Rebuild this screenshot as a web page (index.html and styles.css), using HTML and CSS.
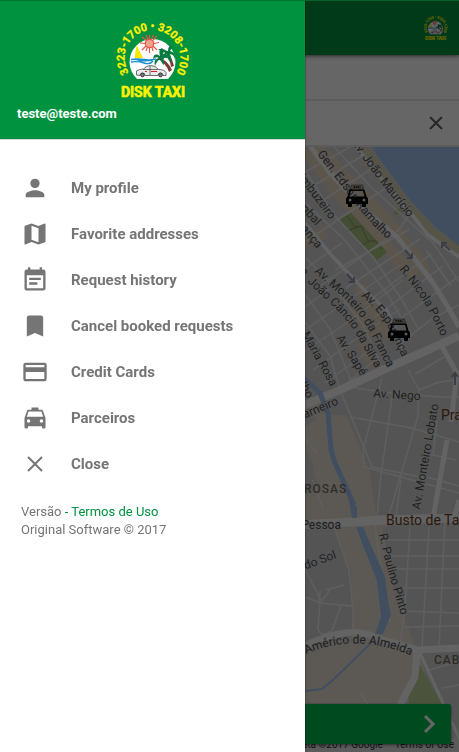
FILE: index.html
```html
<!DOCTYPE html>
<html lang="en">
<head>
<meta charset="utf-8">
<meta name="viewport" content="width=device-width, initial-scale=1">
<title>Disk Taxi</title>
<link rel="stylesheet" href="styles.css">
</head>
<body>
<svg class="defs" aria-hidden="true">
  <symbol id="logo" viewBox="113 21 77 78">
    <path id="ring" d="M151.500 86A28 28 0 1 1 151.600 86" fill="none"/>
    <path d="M136 79A23 23 0 1 1 167 79Z" fill="#fff"/>
    <g stroke="#e4574a" stroke-width="1.200">
      <path d="M148.500 35v4M148.500 48v5M139 43l5 .5M153 43.500l5-1M141 37l4 3M152 46l4 4M156 36l-4 4M145 46l-4 4M145 35l1.500 4M152.500 35l-2 4M152 51l-1-4M145 51l1.500-4" fill="none"/>
      <circle cx="148.500" cy="43.500" r="4.200" fill="#f4a08f"/>
    </g>
    <path d="M135.500 45L142 58H133.500Z" fill="#f7e600"/>
    <path d="M130 59.500q7-1 13 0t12-.5M130 62q7-1 13 1t9-2M134 59q8 3 18 1" fill="none" stroke="#1b8fd0" stroke-width="1.400"/>
    <path d="M158 57q9 4 13 13l-3 2q-3-9-11-13zM167 52q4 6 6 14l-3 1q-1-8-5-14z" fill="#7c3830"/>
    <path d="M159 56q-6-4-7 3q3-3 6-1q-6 1-4 8q2-6 6-7q0 4 3 6q0-5-1-7q5-1 7 2q0-6-7-6q2-4-1-6q-4 2-2 8zM166 51q-6-4-9-1q5 0 7 3q-4 3-2 7q2-4 4-6q0 5 4 9q1-5-1-9q4 0 5 6q1-8-5-9q2-3 3-5q-5-1-5 5z" fill="#087a40"/>
    <path d="M135.500 75v-4q3-2 7-2q3-3.500 7-3.500q5 0 8 4q6 0 7.500 3v3h-3a2.500 2.500 0 0 0-5 0h-13a2.500 2.500 0 0 0-5 0zM142 69.500h15M149 66v9" fill="#e9e9e9" stroke="#333" stroke-width=".7"/>
    <circle cx="141.500" cy="75" r="1.900" fill="#777" stroke="#222" stroke-width=".7"/>
    <circle cx="159.500" cy="75" r="1.900" fill="#777" stroke="#222" stroke-width=".7"/>
    <path d="M144 71.500h2M150 71.500h6" stroke="#c22" stroke-width="1"/>
    <text class="logo-ring" text-anchor="middle"><textPath href="#ring" startOffset="50%">3223-1700 • 3208-1700</textPath></text>
    <text class="logo-name" x="152" y="97" text-anchor="middle">DISK TAXI</text>
  </symbol>
  <symbol id="cab" viewBox="0 0 22 24">
    <path d="M5.500 1h11l1 4h-13z" fill="#b9a998" stroke="#222" stroke-width=".5"/>
    <path d="M7.500 3h7" stroke="#111" stroke-width="1.500" stroke-dasharray="1.500 .5"/>
    <path fill-rule="evenodd" d="M3.500 5.500h15L20.500 12.500 22 14.500V20H20v2.500q-2 1-4 0V20H6v2.500q-2 1-4 0V20H0v-5.500l1.500-2zM5 7L3.500 12.500h15L17 7z" fill="#050505"/>
    <circle cx="4" cy="16" r="1.500" fill="#ddd"/><circle cx="18" cy="16" r="1.500" fill="#ddd"/>
  </symbol>
</svg>

<div class="app">
  <header class="toolbar"><svg class="toolbar-logo" role="img" aria-label="Disk Taxi"><use href="#logo"/></svg></header>
  <div class="address-row"></div>
  <div class="address-row destination">
    <button class="clear" type="button" aria-label="Clear"><svg viewBox="0 0 16 16"><path d="M2 2l12 12M14 2L2 14"/></svg></button>
  </div>
  <main class="map">
    <svg class="map-canvas" viewBox="0 147 459 605" preserveAspectRatio="xMaxYMin slice">
      <defs>
        <path id="r-ramalho" d="M317 154Q340 184 356 205T392 243"/>
        <path id="r-mauricio" d="M351 142Q370 169 384 187T418 230"/>
        <path id="r-monteiro" d="M314 272L345 299Q363 317 372 336T390 372"/>
        <path id="r-cancio" d="M297 273L330 303Q350 322 359 339T379 374"/>
        <path id="r-esperanca" d="M361 296Q382 314 389 329T404 362"/>
        <path id="r-nicola" d="M399 269Q422 297 429 311T442 338"/>
        <path id="r-paulino" d="M379 534Q385 562 391 582T404 625"/>
        <path id="r-americo" d="M306 654Q356 632 412 656"/>
      </defs>
      <rect y="147" width="459" height="605" fill="#d3d3d3"/>
      <g fill="#e5dfd2">
        <path d="M300 400h18l8 15 20 0 25 60 18 55 12 80 30 35h28l-52 58H300V500l18-13-18-60z"/>
      </g>
      <g fill="#d3d3d3">
        <path d="M305 402l12 17-12 8zM305 450l10 18-10 6zM305 527h28l18 43 2 40-2 33-24-6-22 8z"/>
        <path d="M365 440l20-35 5 110h-14zM382 527h77v120l-42 3-20-50zM419 652h40v100l-30-65z"/>
      </g>
      <path d="M368 140L380 160 410 200 433 225 459 246V140z" fill="#a0c4f0"/>
      <path d="M362 147L376 162 406 203 431 229 459 251" fill="none" stroke="#d8d2ae" stroke-width="7"/>
      <g fill="none" stroke="#e4d4bd" stroke-width="12">
        <path d="M318 147L350 184 382 215 409 247 426 273M306 150L337 192 372 229 397 258 416 276M358 286L375 312 385 333 368 330 354 307M362 340l13 28M302 244l23-12"/>
      </g>
      <path d="M339 219l12-6 36 39-10 8z" fill="#a9c27e"/>
      <path d="M393 213l8-6 2 4-7 5z" fill="#b9ce91"/>
      <path d="M347 216l8 11 6-1 7 15 8 0 5 8M347 231l14-5M361 246l9-5" fill="none" stroke="#94916b"/>
      <path d="M420 665l-12 31 1 8h33z" fill="#bdcf9a"/>
      <g fill="none" stroke="#ececec" stroke-width="1.500">
        <path d="M305 172L350 147M315 185L365 154M325 199L373 168M334 222L386 188M305 242L344 216M305 269L342 243M319 287L399 230 410 213M335 270L410 229M346 288L420 239M365 304L431 254M375 317L443 266M389 327L459 276M401 343L433 318 459 305"/>
        <path d="M305 307L329 289M305 330L343 304 400 265M305 351L354 318 403 280M313 370L363 334 400 309M325 383L369 351M342 387L375 360"/>
        <path d="M334 147L372 188 434 244 459 282M305 171L335 216 373 257 402 300 419 330M305 203L345 240 388 295 412 336M305 257L333 286 363 325 383 369M305 294L330 329 352 383M305 322L330 356 340 390 372 467 425 478M426 250L451 286"/>
        <path d="M305 437l12 17M313 480l10 30M382 378L363 450 364 467 459 493M408 370l11 20-1 26-19 65-10 34M415 374l29-17M419 390l17-7 23-4M355 388l28 4 57 5h19M350 417l62 11 47 14M393 391l-12 84-4 43M437 421l-4 33M401 480l-5 35M424 453l32 7M427 477l32 9"/>
        <path d="M375 525l10 70 5 27M410 527l-5 80-5 40M429 527l-7 120M445 520l-6 127M380 540h79M385 556h74M391 569h68M397 588h62M401 611l58 2M404 627l55-1M334 527l15 43 4 40 0 25M305 570l16 30M326 590l18-5M320 590l-1 13 33 3M320 604l-2 25q4 10 14 1l9-24M330 590l-10 13-15-6M361 694l7 11M430 670l29-9M442 688l17-3"/>
      </g>
      <g fill="none" stroke="#f7f7f7" stroke-linejoin="round">
        <path d="M308 143L330 173 367 212 397 237 417 262 433 283 448 307 459 327" stroke-width="5"/>
        <path d="M353 143L380 177 410 212 428 235 459 257" stroke-width="3.500"/>
        <path d="M305 223L333 257 367 293 387 310 403 347" stroke-width="3.500"/>
        <path d="M300 407L340 390 383 370 459 336" stroke-width="8"/>
        <path d="M441 345L457 373 451 422M447 440L433 518M459 500l-5 19" stroke-width="5"/>
        <path d="M300 525L383 520 459 518" stroke-width="9"/>
        <path d="M300 648Q350 623 377 638L417 650 459 648M417 650L415 677 400 705" stroke-width="7"/>
        <path d="M420 653L459 738" stroke-width="3"/>
      </g>
      <path d="M303 377L320 393 328 413 331 450 335 463 354 505" fill="none" stroke="#a0c4f0" stroke-width="5"/>
      <path d="M343 482L357 508V518H352L348 496zM356 527h7L385 577l3 23 3 15-8 19h-8l6-17-4-36z" fill="#a0c4f0"/>
      <path d="M372 642L333 680 322 689 305 691" fill="none" stroke="#a0c4f0" stroke-width="2"/>
      <g fill="none" stroke="#9199ad" stroke-width="2"><path d="M405 250l7 8m0-5v5h-5M450 250l-8-7m0 5v-5h5M347 274l7 8m0-5v5h-5M455 385v-12m-3 4l3-4 3 4"/></g>
      <g class="streets">
        <text><textPath href="#r-ramalho">Gen. Edson Ramalho</textPath></text>
        <text><textPath href="#r-mauricio">Av. João Maurício</textPath></text>
        <text><textPath href="#r-monteiro">Av. Monteiro da Franca</textPath></text>
        <text><textPath href="#r-cancio">R. João Câncio da Silva</textPath></text>
        <text><textPath href="#r-esperanca">Av. Esperança</textPath></text>
        <text><textPath href="#r-nicola">R. Nicola Porto</textPath></text>
        <text><textPath href="#r-paulino">R. Paulino Pinto</textPath></text>
        <text><textPath href="#r-americo">Américo de Almeida</textPath></text>
        <text class="to" transform="translate(330 220) rotate(53)">Imbuzeiro</text>
        <text class="to" transform="translate(316 226) rotate(48)">mbal</text>
        <text class="to" transform="translate(317 249) rotate(50)">ança</text>
        <text transform="translate(336 338) rotate(57)">Av. Sapé</text>
        <text class="to" transform="translate(331 387) rotate(61)">Maria Rosa</text>
        <text class="to" transform="translate(307 399) rotate(62)">lho</text>
        <text class="to" transform="translate(339 404) rotate(-23)">arneiro</text>
        <text transform="translate(373 397) rotate(4)">Av. Nego</text>
        <text transform="translate(420 510) rotate(-80)">Av. Monteiro Lobato</text>
        <text class="to" transform="translate(341 529)">Pessoa</text>
        <text class="to" transform="translate(337 558) rotate(-20)">do Sol</text>
      </g>
      <g class="places"><text x="441" y="420">Pra</text><text x="386" y="525">Busto de Tar</text></g>
      <g class="districts"><text x="304" y="493">ROSAS</text><text x="434" y="664">CAB</text></g>
      <use href="#cab" x="346" y="184" width="22" height="24"/>
      <use href="#cab" x="388" y="318" width="22" height="24"/>
    </svg>
    <div class="attribution"><span>Map data ©2017 Google</span><span>Terms of Use</span></div>
    <button class="next" type="button" aria-label="Next"><svg viewBox="0 0 14 20"><path d="M2 2l8 8-8 8"/></svg></button>
  </main>
</div>
<div class="scrim"></div>

<aside class="drawer">
  <header class="profile">
    <svg class="profile-logo" role="img" aria-label="Disk Taxi"><use href="#logo"/></svg>
    <p class="email">teste@teste.com</p>
  </header>
  <nav class="menu">
    <a href="#profile"><svg viewBox="0 0 24 24"><path d="M12 12a4 4 0 1 0 0-8 4 4 0 0 0 0 8zm0 2c-2.700 0-8 1.300-8 4v2h16v-2c0-2.700-5.300-4-8-4z"/></svg>My profile</a>
    <a href="#favorites"><svg viewBox="0 0 24 24"><path d="M20.500 3l-.2.030L15 5.100 9 3 3.400 4.900a.5.5 0 0 0-.4.500v15.100c0 .3.200.5.500.5l.2-.030L9 18.900l6 2.100 5.600-1.900c.2-.1.400-.3.400-.5V3.500a.5.500 0 0 0-.5-.5zM15 19l-6-2.100V5l6 2.100z"/></svg>Favorite addresses</a>
    <a href="#history"><svg viewBox="0 0 24 24"><path d="M17 10H7v2h10zm2-7h-1V1h-2v2H8V1H6v2H5a2 2 0 0 0-2 2v14c0 1.100.9 2 2 2h14a2 2 0 0 0 2-2V5a2 2 0 0 0-2-2zm0 16H5V8h14zm-5-5H7v2h7z"/></svg>Request history</a>
    <a href="#booked"><svg viewBox="0 0 24 24"><path d="M17 3H7a2 2 0 0 0-2 2v16l7-3 7 3V5a2 2 0 0 0-2-2z"/></svg>Cancel booked requests</a>
    <a href="#cards"><svg viewBox="0 0 24 24"><path d="M20 4H4a2 2 0 0 0-2 2v12c0 1.100.9 2 2 2h16a2 2 0 0 0 2-2V6a2 2 0 0 0-2-2zm0 14H4v-6h16zm0-10H4V6h16z"/></svg>Credit Cards</a>
    <a href="#partners"><svg viewBox="0 0 24 24"><path d="M18.900 6c-.2-.6-.8-1-1.400-1H15V3H9v2H6.500c-.7 0-1.200.4-1.400 1L3 12v8a1 1 0 0 0 1 1h1a1 1 0 0 0 1-1v-1h12v1a1 1 0 0 0 1 1h1a1 1 0 0 0 1-1v-8zM6.500 16a1.500 1.500 0 1 1 0-3 1.500 1.500 0 0 1 0 3zm11 0a1.500 1.500 0 1 1 0-3 1.500 1.500 0 0 1 0 3zM5 11l1.500-4.500h11L19 11z"/></svg>Parceiros</a>
    <button type="button"><svg viewBox="0 0 24 24"><path d="M6.600 5.400L12 10.800l5.400-5.400 1.200 1.200-5.400 5.400 5.400 5.400-1.200 1.200-5.400-5.400-5.400 5.400-1.200-1.200 5.400-5.400-5.400-5.400z"/></svg>Close</button>
  </nav>
  <footer class="about">
    <p>Versão <a href="#terms">- Termos de Uso</a></p>
    <p>Original Software © 2017</p>
  </footer>
</aside>
</body>
</html>
```
FILE: styles.css
```css
* { box-sizing: border-box; }

body {
  margin: 0;
  font-family: Roboto, "Liberation Sans", sans-serif;
  color: #757575;
  background: #fff;
}

p { margin: 0; }

.defs { position: absolute; width: 0; height: 0; }

/* Screen behind the drawer */
.app {
  display: flex;
  flex-direction: column;
  min-height: 100vh;
}

.toolbar {
  position: relative;
  z-index: 1;
  display: flex;
  align-items: center;
  justify-content: flex-end;
  height: 55px;
  padding: 0 11px;
  background: #00923f;
  border-top: 1px solid #00ff70;
  box-shadow: 0 1px 4px rgba(0, 0, 0, 0.6);
}

.toolbar-logo { width: 25px; height: 26px; }

.address-row {
  display: flex;
  align-items: center;
  justify-content: flex-end;
  height: 46px;
  border-bottom: 2px solid #e6e6e6;
}

.clear, .next { border: 0; background: none; padding: 0; }

.clear { margin-right: 15px; width: 16px; height: 16px; }

.clear svg { display: block; stroke: #606060; stroke-width: 2; }

.map {
  position: relative;
  display: flex;
  flex: 1;
  flex-direction: column;
  justify-content: flex-end;
  padding: 0 8px 8px;
  overflow: hidden;
}

.map-canvas {
  position: absolute;
  inset: 0;
  width: 100%;
  height: 100%;
}

.streets text {
  font-size: 12px;
  fill: #505050;
  stroke: #ddd;
  stroke-width: 1px;
  paint-order: stroke;
}

.streets .to { text-anchor: end; }

.places text { font-size: 14px; fill: #6b4020; }

.districts text {
  font-size: 12px;
  font-weight: 500;
  letter-spacing: 1px;
  fill: #79715f;
}

.attribution {
  position: absolute;
  right: 0;
  bottom: 0;
  display: flex;
  gap: 12px;
  padding: 0 5px;
  font-size: 10px;
  line-height: 14px;
  color: #333;
  background: rgba(255, 255, 255, 0.4);
}

.next {
  position: relative;
  display: flex;
  align-items: center;
  justify-content: flex-end;
  width: 100%;
  height: 40px;
  padding-right: 14px;
  border-radius: 2px;
  background: #00b84e;
  box-shadow: 0 1px 3px rgba(0, 0, 0, 0.5);
}

.next svg {
  width: 14px;
  height: 20px;
  fill: none;
  stroke: #fff;
  stroke-width: 3;
}

.scrim {
  position: fixed;
  inset: 0;
  z-index: 2;
  background: rgba(0, 0, 0, 0.6);
}

/* Navigation drawer */
.drawer {
  position: fixed;
  inset: 0 auto 0 0;
  z-index: 3;
  width: 305px;
  max-width: 90%;
  overflow-y: auto;
  background: #fff;
  box-shadow: 0 0 2px rgba(0, 0, 0, 0.6);
}

.profile {
  display: flex;
  flex-direction: column;
  align-items: center;
  gap: 5px;
  height: 140px;
  padding: 20px 17px 0;
  background: #00923f;
  border-top: 1px solid #00752f;
  border-bottom: 1px solid #d5d5d5;
}

.profile-logo { width: 77px; height: 78px; }

.logo-ring, .logo-name {
  font-family: Roboto, sans-serif;
  font-weight: 700;
  fill: #fff200;
  stroke: #fff200;
}

.logo-ring { font-size: 11px; stroke-width: 0.3px; }

.logo-name { font-size: 14px; stroke-width: 0.6px; }

.email {
  align-self: flex-start;
  font-size: 13px;
  font-weight: 700;
  line-height: 20px;
  color: #fff;
}

.menu { padding-top: 25px; }

.menu a, .menu button {
  display: flex;
  align-items: center;
  gap: 22px;
  width: 100%;
  height: 46px;
  padding: 0 21px;
  border: 0;
  background: none;
  font: 700 15px Roboto, "Liberation Sans", sans-serif;
  color: #757575;
  text-align: left;
  text-decoration: none;
}

.menu svg { width: 28px; height: 28px; fill: #757575; }

.about {
  padding: 16px 21px;
  font-size: 13px;
  line-height: 18px;
}

.about a { color: #00923f; text-decoration: none; }
```
